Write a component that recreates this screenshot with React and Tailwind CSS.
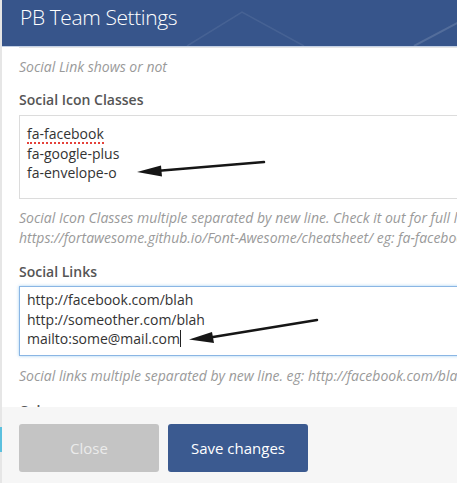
export default function App() {
  return (
    <div className="relative w-[457px] h-[483px] overflow-hidden flex bg-white font-['Open_Sans',sans-serif]">
      {/* backdrop sliver on the left */}
      <div className="w-[2px] shrink-0 flex flex-col bg-[#e6e6e6]">
        <div className="h-[427px]" />
        <div className="h-[25px] bg-[#5bc0de]" />
      </div>

      <div className="flex-1 min-w-0 flex flex-col">
        {/* Header */}
        <div className="relative h-[46px] shrink-0 bg-[#37558b] overflow-hidden">
          <svg className="absolute inset-0" width="455" height="46">
            <polyline points="185,46 240,12 302,46" fill="none" stroke="#ffffff" strokeOpacity="0.08" strokeWidth="1.5" />
            <line x1="412" y1="46" x2="457" y2="22" stroke="#ffffff" strokeOpacity="0.14" strokeWidth="2" />
          </svg>
          <h4 className="relative pl-[18px] text-[21px] leading-[34px] text-white font-light tracking-[-0.4px]">PB Team Settings</h4>
        </div>
        <div className="h-[1px] shrink-0 bg-[#c3d1e6]" />

        {/* Body */}
        <div className="flex-1 min-h-0 overflow-hidden">
          <div className="w-[540px] pl-[17px]">
            <div className="h-[1px] border-b border-[#e6e6e6]" />
            <p className="mt-[9px] text-[14px] leading-[20px] italic text-[#9a9a9a]">Social Link shows or not</p>

            <label className="block mt-[13px] text-[14px] leading-[20px] font-semibold text-[#555]">Social Icon Classes</label>
            <div className="mt-[5px] h-[84px] border border-[#dcdcdc] pl-[7px] pt-[8px] text-[14px] leading-[19.5px] text-[#333]">
              <div className="h-[19.5px]">
                <span className="border-b-2 border-dotted border-[#e5413a] leading-[16px] inline-block">fa-facebook</span>
              </div>
              <div>fa-google-plus</div>
              <div>fa-envelope-o</div>
            </div>
            <p className="mt-[9px] text-[14px] leading-[20px] italic text-[#9a9a9a] whitespace-nowrap">
              Social Icon Classes multiple separated by new line. Check it out for full list
              <br />
              https://fortawesome.github.io/Font-Awesome/cheatsheet/ eg: fa-facebook
            </p>

            <label className="block mt-[14px] text-[14px] leading-[20px] font-semibold text-[#555]">Social Links</label>
            <div className="mt-[4px] h-[70px] border border-[#8ab6e4] shadow-[0_0_3px_rgba(102,175,233,0.6)] pl-[7px] pt-[3px] text-[14px] leading-[19.5px] text-[#333]">
              <div>http://facebook.com/blah</div>
              <div>http://someother.com/blah</div>
              <div className="flex items-center">
                mailto:some@mail.com
                <span className="inline-block w-[1px] h-[17px] bg-[#222]" />
              </div>
            </div>
            <p className="mt-[10px] text-[14px] leading-[20px] italic text-[#9a9a9a] whitespace-nowrap">
              Social links multiple separated by new line. eg: http://facebook.com/blah
            </p>

            <label className="block mt-[15px] text-[14px] leading-[20px] font-semibold text-[#555]">Color</label>
          </div>
        </div>

        {/* Footer */}
        <div className="h-[76px] shrink-0 bg-[#f6f6f6] pl-[17px] pt-[17px] flex gap-[9px]">
          <button className="w-[140px] h-[48px] rounded-[3px] bg-[#c4c4c4] text-[15px] text-[#ebebeb]">Close</button>
          <button className="w-[140px] h-[48px] rounded-[3px] bg-[#3b5a90] text-[15px] text-white">Save changes</button>
        </div>
      </div>

      {/* annotation arrows */}
      <svg className="absolute inset-0 pointer-events-none" width="457" height="483">
        <line x1="264" y1="162" x2="156" y2="171" stroke="#161616" strokeWidth="2.5" strokeLinecap="round" />
        <polygon points="137,172 161,165.5 162,176.5" fill="#161616" />
        <line x1="317" y1="320" x2="210" y2="337.5" stroke="#161616" strokeWidth="2.5" strokeLinecap="round" />
        <polygon points="189,339.5 212,332 214,343" fill="#161616" />
      </svg>
    </div>
  );
}
